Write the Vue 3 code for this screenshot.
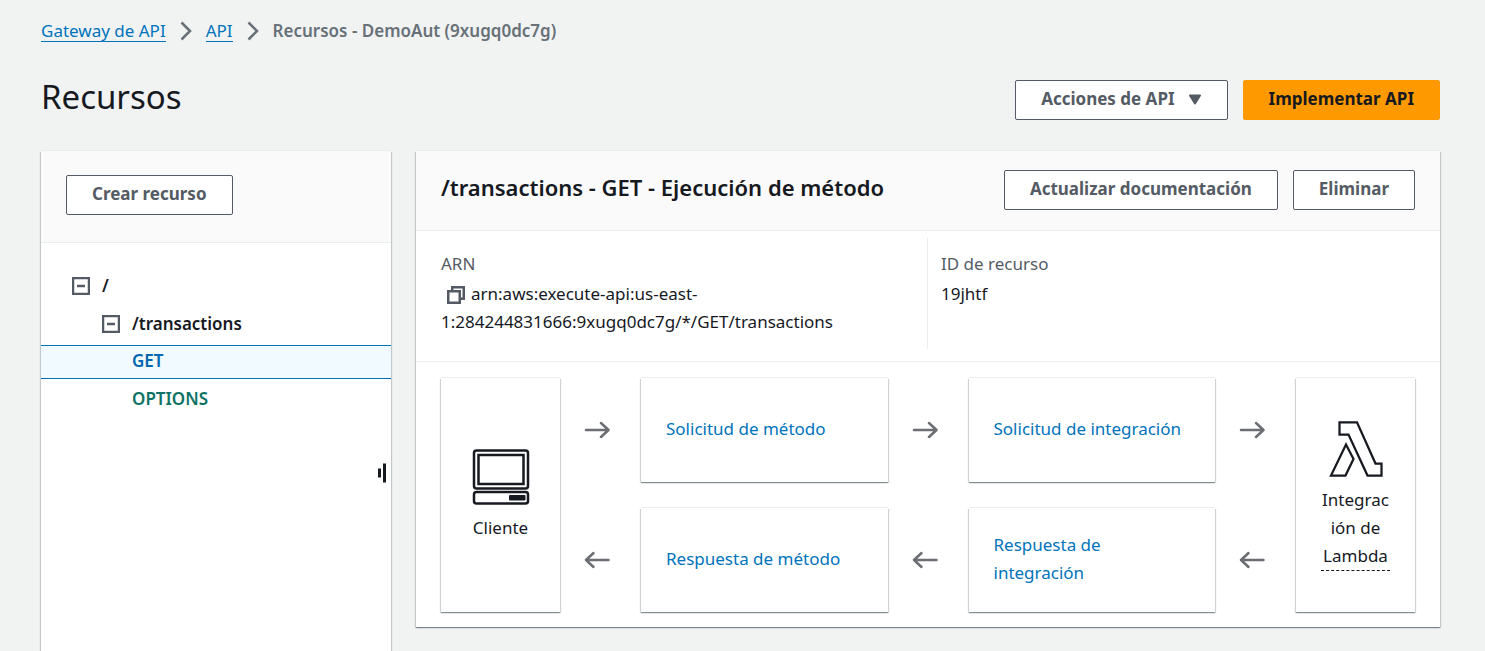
<script setup>
const crumbs = [
  { text: 'Gateway de API', href: '#gateway' },
  { text: 'API', href: '#api' },
]
const arn = ['arn:aws:execute-api:us-east-', '1:284244831666:9xugq0dc7g/*/GET/transactions']
const requestSteps = ['Solicitud de método', 'Solicitud de integración']
const responseSteps = ['Respuesta de método', 'Respuesta de integración']
</script>

<template>
  <div class="page">
    <nav class="crumbs" aria-label="Ruta de navegación">
      <template v-for="c in crumbs" :key="c.text">
        <a :href="c.href">{{ c.text }}</a>
        <svg class="chevron" width="12" height="20" viewBox="0 0 12 20" aria-hidden="true">
          <path d="M1.5 1.5 10 10 1.5 18.500" />
        </svg>
      </template>
      <span class="current" aria-current="page">Recursos - DemoAut (9xugq0dc7g)</span>
    </nav>

    <header class="title-bar">
      <h1>Recursos</h1>
      <div class="actions">
        <button class="btn" type="button">
          Acciones de API
          <svg class="caret" width="14" height="11" viewBox="0 0 14 11" aria-hidden="true">
            <path d="M2 1.500h10L7 9.500z" />
          </svg>
        </button>
        <button class="btn primary" type="button">Implementar API</button>
      </div>
    </header>

    <div class="workspace">
      <aside class="panel sidebar">
        <div class="side-head">
          <button class="btn" type="button">Crear recurso</button>
        </div>
        <ul class="tree">
          <li class="row">
            <button class="toggle" type="button" aria-label="Contraer /">
              <svg width="18" height="18" viewBox="0 0 18 18"><path d="M1 1h16v16H1zM5 9h8" /></svg>
            </button>
            <span>/</span>
          </li>
          <li class="row level-1">
            <button class="toggle" type="button" aria-label="Contraer /transactions">
              <svg width="18" height="18" viewBox="0 0 18 18"><path d="M1 1h16v16H1zM5 9h8" /></svg>
            </button>
            <span>/transactions</span>
          </li>
          <li class="row level-2 selected"><a class="get" href="#get">GET</a></li>
          <li class="row level-2"><a class="options" href="#options">OPTIONS</a></li>
        </ul>
        <button class="resizer" type="button" aria-label="Cambiar tamaño del panel">
          <svg width="8" height="20" viewBox="0 0 8 20">
            <path d="M1.500 5.500v9M6.500 .5v19" />
          </svg>
        </button>
      </aside>

      <main class="panel">
        <div class="main-head">
          <h2>/transactions - GET - Ejecución de método</h2>
          <div class="actions">
            <button class="btn" type="button">Actualizar documentación</button>
            <button class="btn" type="button">Eliminar</button>
          </div>
        </div>

        <dl class="info">
          <div>
            <dt>ARN</dt>
            <dd>
              <button class="copy" type="button" aria-label="Copiar ARN">
                <svg width="18" height="18" viewBox="0 0 18 18">
                  <path d="M1.250 5.250h11.500v11.500H1.250zM5.250 5V1.250h11.500v11.500H13" />
                </svg>
              </button>{{ arn[0] }}<br />{{ arn[1] }}
            </dd>
          </div>
          <div>
            <dt>ID de recurso</dt>
            <dd>19jhtf</dd>
          </div>
        </dl>

        <div class="flow">
          <div class="card end client">
            <svg width="58" height="56" viewBox="0 0 58 56" aria-hidden="true">
              <g fill="none" stroke="#16191f" stroke-width="2.500">
                <rect x="2" y="1.500" width="54" height="38" rx="2.500" />
                <rect x="6.500" y="6" width="45" height="29" />
                <rect x="2" y="43" width="54" height="11.500" rx="2.500" />
              </g>
              <rect x="37" y="46" width="16.500" height="5.500" rx="1" fill="#16191f" />
            </svg>
            <span>Cliente</span>
          </div>

          <template v-for="s in requestSteps" :key="s">
            <svg class="arrow" width="26" height="18" viewBox="0 0 26 18" aria-hidden="true">
              <path d="M2 9H24.500M17 2 24.500 9 17 16" />
            </svg>
            <div class="card step"><a href="#step">{{ s }}</a></div>
          </template>
          <svg class="arrow" width="26" height="18" viewBox="0 0 26 18" aria-hidden="true">
            <path d="M2 9H24.500M17 2 24.500 9 17 16" />
          </svg>

          <div class="card end lambda">
            <svg width="54" height="56" viewBox="0 0 54 56" aria-hidden="true">
              <path
                d="M10.500 1.250H28L46.500 42.500h6v12H38.500L19.500 13.500h-9zM17 23.500 24.500 38l-8 16.500H2z"
                fill="none" stroke="#16191f" stroke-width="2.250"
              />
            </svg>
            <span class="target">Integración de Lambda</span>
          </div>

          <template v-for="s in responseSteps" :key="s">
            <svg class="arrow" width="26" height="18" viewBox="0 0 26 18" aria-hidden="true">
              <path d="M24.500 9H2M9.500 2 2 9l7.500 7" />
            </svg>
            <div class="card step"><a href="#step">{{ s }}</a></div>
          </template>
          <svg class="arrow" width="26" height="18" viewBox="0 0 26 18" aria-hidden="true">
            <path d="M24.500 9H2M9.500 2 2 9l7.500 7" />
          </svg>
        </div>
      </main>
    </div>
  </div>
</template>

<style>
body {
  margin: 0;
  background: #f1f3f3;
}
</style>

<style scoped>
* {
  box-sizing: border-box;
}
.page {
  display: flex;
  flex-direction: column;
  min-height: 100vh;
  padding: 17px 45px 0 41px;
  background: #f1f3f3;
  color: #16191f;
  font-family: "Noto Sans", "Open Sans", sans-serif;
  font-size: 17px;
  line-height: 28px;
}
svg {
  display: block;
  flex: none;
}
a {
  color: #0073bb;
  text-decoration: none;
}
button {
  font: inherit;
  cursor: pointer;
}
.crumbs {
  display: flex;
  align-items: center;
  gap: 14px;
}
.crumbs a {
  line-height: 21px;
  border-bottom: 1px solid #0073bb;
}
.chevron path {
  fill: none;
  stroke: #687078;
  stroke-width: 2.5;
}
.current {
  color: #687078;
  font-weight: 600;
}
.title-bar {
  display: flex;
  justify-content: space-between;
  margin-top: 30px;
}
h1 {
  margin: 0;
  font-size: 33px;
  line-height: 44px;
  font-weight: 400;
}
.actions {
  display: flex;
  gap: 15px;
}
.title-bar .actions {
  margin-top: 5px;
}
.btn {
  display: flex;
  align-items: center;
  gap: 13px;
  height: 40px;
  padding: 0 25px 2px;
  border: 1px solid #545b64;
  border-radius: 2px;
  background: #fff;
  color: #545b64;
  font-weight: 700;
  white-space: nowrap;
}
.caret path {
  fill: #545b64;
  stroke: #545b64;
  stroke-width: 2;
  stroke-linejoin: round;
}
.primary {
  border-color: #ff9900;
  background: #ff9900;
  color: #16191f;
}
.workspace {
  display: grid;
  grid-template-columns: 350px minmax(0, 1fr);
  gap: 25px;
  flex: 1;
  margin-top: 31px;
}
.panel {
  position: relative;
  background: #fff;
  box-shadow: 0 1px 1px 0 rgba(0, 28, 36, 0.3), 1px 1px 1px 0 rgba(0, 28, 36, 0.15),
    -1px 1px 1px 0 rgba(0, 28, 36, 0.15), 0 -1px 0 0 #eaeded;
}
main {
  align-self: start;
}
.side-head {
  padding: 24px 25px 27px;
  border-bottom: 1px solid #eaeded;
  background: #fafafa;
  display: flex;
}
.tree {
  margin: 0;
  padding: 26px 0 0;
  list-style: none;
  font-weight: 600;
}
.row {
  display: flex;
  align-items: center;
  gap: 12px;
  height: 34px;
  margin-bottom: 4px;
  padding-left: 31px;
}
.level-1 {
  padding-left: 61px;
}
.level-2 {
  padding-left: 91px;
  padding-bottom: 2px;
}
.selected {
  border: solid #0073bb;
  border-width: 1px 0;
  background: #f1faff;
}
.get {
  color: #0067b0;
}
.options {
  color: #0d7263;
}
.toggle,
.copy,
.resizer {
  padding: 0;
  border: 0;
  background: none;
}
.toggle path,
.copy path {
  fill: none;
  stroke: #545b64;
  stroke-width: 2.5;
}
.resizer {
  position: absolute;
  top: 312px;
  right: 5px;
  cursor: col-resize;
}
.resizer path {
  stroke: #16191f;
  stroke-width: 3;
}
.main-head {
  display: flex;
  justify-content: space-between;
  padding: 19px 25px 20px;
  border-bottom: 1px solid #eaeded;
  background: #fafafa;
}
h2 {
  margin: 0;
  font-size: 22px;
  line-height: 34px;
  font-weight: 600;
}
.info {
  display: grid;
  grid-template-columns: 1fr 1fr;
  margin: 0;
  padding: 7px 27px 12px 25px;
  border-bottom: 1px solid #eaeded;
}
.info > div {
  padding: 12px 0 13px;
}
.info > div + div {
  padding-left: 13px;
  border-left: 1px solid #eaeded;
}
dt {
  color: #545b64;
  margin-bottom: 2px;
}
dd {
  margin: 0;
}
.copy {
  display: inline-block;
  margin: 0 6px;
  vertical-align: -4px;
  line-height: 1;
}
.flow {
  display: grid;
  grid-template-columns: 119px 81px minmax(0, 1fr) 81px minmax(0, 1fr) 81px 119px;
  grid-auto-rows: minmax(104px, auto);
  row-gap: 26px;
  padding: 16px 25px 15px;
}
.card {
  background: #fff;
  box-shadow: 0 1px 1px 0 rgba(0, 28, 36, 0.3), 1px 1px 1px 0 rgba(0, 28, 36, 0.15),
    -1px 1px 1px 0 rgba(0, 28, 36, 0.15), 0 -1px 0 0 #eaeded;
}
.end {
  display: flex;
  flex-direction: column;
  align-items: center;
  justify-content: center;
  grid-row: 1 / 3;
  gap: 9px;
  padding: 0 25px;
  text-align: center;
}
.client {
  grid-column: 1;
}
.lambda {
  grid-column: 7;
  padding-top: 1px;
}
.target {
  width: 100%;
  border-bottom: 1px dashed #16191f;
  overflow-wrap: anywhere;
}
.step {
  display: flex;
  align-items: center;
  padding: 0 25px 2px;
}
.arrow {
  align-self: center;
  margin-left: 24px;
}
.arrow path {
  fill: none;
  stroke: #6b6e73;
  stroke-width: 2.5;
  stroke-linecap: round;
  stroke-linejoin: round;
}
</style>
